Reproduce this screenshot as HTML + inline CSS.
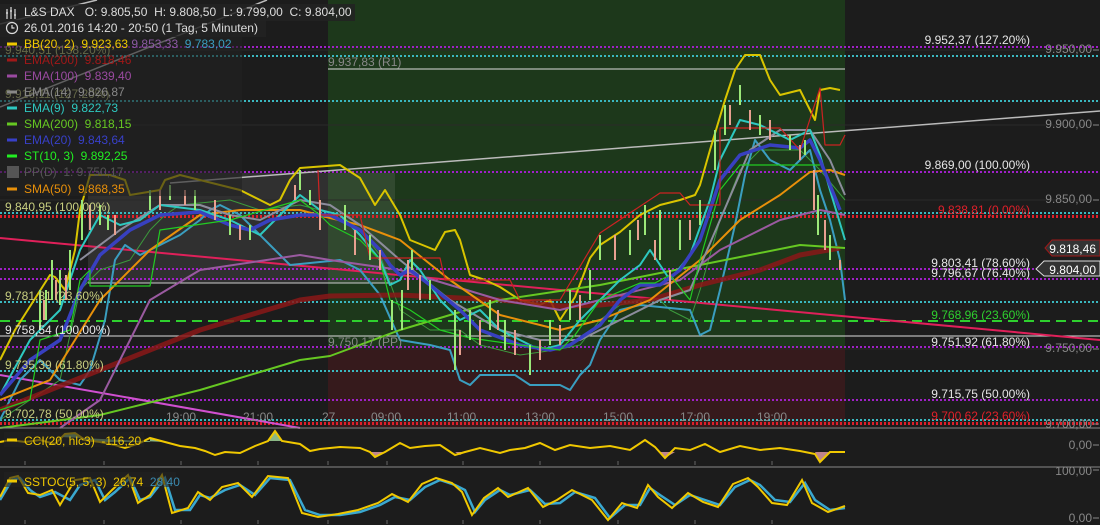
<!DOCTYPE html>
<html><head><meta charset="utf-8"><style>
html,body{margin:0;padding:0;background:#1c1c1c;}
svg{display:block;font-family:"Liberation Sans",sans-serif;}
text{white-space:pre;}
</style></head><body>
<svg width="1100" height="525" viewBox="0 0 1100 525" xmlns="http://www.w3.org/2000/svg" xml:space="preserve">
<rect width="1100" height="525" fill="#1c1c1c"/>
<rect x="328" y="0" width="517" height="348" fill="#1d381b"/>
<rect x="328" y="348" width="517" height="79" fill="#361a1c"/>
<rect x="88" y="173" width="307" height="110" fill="#ffffff" fill-opacity="0.09"/>
<line x1="88" y1="283" x2="395" y2="283" stroke="#ccc" stroke-width="1"/>
<line x1="328" y1="69" x2="845" y2="69" stroke="#ddd" stroke-width="1"/>
<line x1="0" y1="336" x2="1100" y2="336" stroke="#ddd" stroke-width="1"/>
<g stroke="#2a2a2a" stroke-width="1">
<line x1="0" y1="50" x2="1090" y2="50"/><line x1="0" y1="125" x2="1090" y2="125"/><line x1="0" y1="200" x2="1090" y2="200"/><line x1="0" y1="349" x2="1090" y2="349"/>
</g>
<g fill="none" stroke-width="2" stroke-dasharray="2 2">
<line x1="0" y1="47" x2="1100" y2="47" stroke="#a020c8"/>
<line x1="0" y1="56" x2="1100" y2="56" stroke="#3bb8c0"/>
<line x1="0" y1="101" x2="1100" y2="101" stroke="#3bb8c0"/>
<line x1="0" y1="172" x2="1100" y2="172" stroke="#a020c8"/>
<line x1="0" y1="213" x2="1100" y2="213" stroke="#3bb8c0"/>
<line x1="0" y1="216.5" x2="1100" y2="216.5" stroke="#e0202a" stroke-width="3"/>
<line x1="0" y1="269" x2="1100" y2="269" stroke="#a020c8"/>
<line x1="0" y1="279" x2="1100" y2="279" stroke="#a020c8"/>
<line x1="0" y1="302" x2="1100" y2="302" stroke="#3bb8c0"/>
<line x1="0" y1="347" x2="1100" y2="347" stroke="#a020c8"/>
<line x1="0" y1="371" x2="1100" y2="371" stroke="#3bb8c0"/>
<line x1="0" y1="400" x2="1100" y2="400" stroke="#a020c8"/>
<line x1="0" y1="420" x2="1100" y2="420" stroke="#3bb8c0"/>
<line x1="0" y1="423.5" x2="1100" y2="423.5" stroke="#e0202a" stroke-width="3"/>
</g>
<line x1="0" y1="321" x2="1100" y2="321" stroke="#2ed02e" stroke-width="2" stroke-dasharray="10 6"/>
<g fill="none" stroke-width="1.5">
<line x1="0" y1="24" x2="97" y2="0" stroke="#bbb"/>
<line x1="0" y1="107" x2="267" y2="0" stroke="#bbb"/>
<line x1="170" y1="183" x2="1100" y2="111" stroke="#bbb"/>
<line x1="0" y1="238" x2="1100" y2="340" stroke="#e0205a" stroke-width="2"/>
<line x1="0" y1="375" x2="300" y2="428" stroke="#d050d0" stroke-width="2"/>
</g>
<g fill="none" stroke-linejoin="round">
<polyline stroke="#3c9a3c" stroke-width="1" points="0,420 60,380 80,290 100,270 130,260 150,230 165,215 180,205 230,200 260,210 300,205 340,215 360,230 380,255 400,310 430,330 460,330 480,345 520,355 555,350 580,345 600,320 620,305 640,300 660,300 670,310 690,320 700,290 720,220 740,170 760,150 800,150 820,170 845,200"/>
<polyline stroke="#d9c400" stroke-width="2" points="0,360 15,330 50,275 55,277 65,290 75,250 80,210 90,175 110,175 125,180 130,195 160,190 165,180 180,175 200,180 240,190 270,205 280,200 290,180 300,168 340,165 360,178 375,205 385,190 400,215 410,240 435,250 445,232 455,230 460,240 470,275 485,280 500,287 520,300 540,305 550,300 560,320 575,297 590,258 600,245 620,232 640,215 660,205 680,200 695,195 700,185 710,150 725,100 735,70 745,55 760,55 770,80 780,95 800,90 810,110 815,120 820,90 830,88 840,90"/>
<polyline stroke="#3a9ec0" stroke-width="2" points="0,420 20,380 40,360 60,380 80,385 90,370 105,320 115,260 125,245 140,255 150,250 180,235 200,220 210,210 220,205 240,215 270,245 290,265 320,262 340,260 360,270 380,295 400,340 430,345 450,350 460,380 470,385 480,375 515,375 530,385 560,385 570,390 580,375 590,365 600,340 620,310 640,305 690,310 700,335 710,330 720,290 735,225 745,175 755,140 770,160 790,170 810,150 820,190 830,220 840,260 845,300"/>
<polyline stroke="#8a1818" stroke-width="5" stroke-opacity="0.85" points="0,410 100,370 200,330 300,300 330,296 400,295 500,300 560,306 600,305 650,300 700,285 760,270 800,255 840,248"/>
<polyline stroke="#66c822" stroke-width="2" points="0,428 100,415 200,390 300,360 330,356 400,330 500,300 600,285 700,265 800,245 845,248"/>
<polyline stroke="#9a5aa0" stroke-width="2" points="60,428 100,400 150,300 200,270 300,255 330,260 400,270 500,300 560,310 600,300 680,280 720,250 780,220 820,210 845,215"/>
<polyline stroke="#e8900a" stroke-width="2" points="0,400 50,380 100,300 150,250 200,215 240,210 300,210 330,218 360,225 400,240 450,280 500,315 560,330 600,320 650,300 700,260 740,220 780,195 810,172 830,170 845,175"/>
<polyline stroke="#8c8c9c" stroke-width="2" points="80,260 120,230 160,205 200,205 230,215 260,220 300,200 330,205 360,225 400,260 450,300 500,330 540,340 580,340 620,320 660,300 690,290 720,220 750,150 780,130 810,130 830,160 845,195"/>
<polyline stroke="#2ec8c0" stroke-width="2" points="0,395 30,340 60,310 80,250 100,215 120,225 140,220 160,205 200,210 230,220 260,235 280,215 300,195 320,210 340,215 360,235 380,260 390,285 400,280 410,260 420,270 440,300 460,320 480,310 500,330 520,340 540,350 560,345 580,320 600,300 620,280 640,265 650,250 660,265 670,280 690,255 710,200 720,160 740,120 760,125 790,140 810,130 820,155 830,190 845,240"/>
<polyline stroke="#3840c0" stroke-width="3.5" points="0,395 30,360 60,340 80,290 100,255 130,230 160,215 200,212 230,225 250,230 270,220 300,215 330,215 360,230 380,250 390,265 400,275 410,270 430,285 460,310 480,330 520,345 550,350 570,345 600,325 620,300 640,285 660,285 680,270 700,240 720,180 740,155 770,145 800,148 810,140 820,160 840,210"/>
<polyline stroke="#22cc22" stroke-width="1.2" points="0,410 30,400 40,340 70,330 80,280 90,270 90,286 150,286 160,230 230,220 300,200 320,215 330,225 360,240 380,260 390,300 410,310 440,330 470,338 520,345 560,350 575,335 600,300 640,283 655,283 670,275 690,300 700,260 720,190 740,165 820,165"/>
<polyline stroke="#cc2222" stroke-width="1.2" points="318,170 320,215 360,215 370,258 440,258 445,280 510,280 520,300 560,300 600,233 660,193 680,193 690,205 720,205 720,128 780,128 800,150 820,88 825,145 840,145 845,135"/>
</g>
<g stroke-width="2">
<path d="M40 330v-40M46 320v-30M52 300v-40M60 305v-35M70 290v-40M82 240v-40M100 225v-20M108 230v-15M150 210v-20M170 200v-15M195 210v-20M230 235v-20M250 240v-15M300 190v-20M310 205v-15M345 230v-25M370 260v-25M392 330v-30M402 330v-40M412 270v-20M430 300v-20M455 370v-60M470 340v-30M490 330v-30M505 350v-30M530 375v-30M550 345v-25M570 320v-30M590 300v-30M600 260v-25M630 255v-25M645 235v-30M660 260v-50M680 250v-30M700 225v-25M715 170v-40M725 135v-30M740 105v-20M760 135v-20M790 150v-15M805 155v-15M818 235v-40M830 260v-25" stroke="#9be878"/>
<path d="M44 320v-20M56 300v-20M66 300v-25M90 230v-25M115 235v-20M160 210v-20M185 205v-15M215 220v-20M240 240v-15M295 200v-15M320 230v-30M355 255v-25M380 270v-20M408 290v-30M420 300v-25M460 355v-25M480 345v-25M498 330v-20M515 355v-25M540 360v-20M560 345v-20M580 320v-25M615 260v-25M638 240v-20M655 260v-20M670 300v-30M690 240v-20M730 125v-20M750 130v-20M770 140v-20M800 160v-15M814 210v-40M825 250v-30M840 270v-10" stroke="#e8a090"/>
</g>
<g font-size="12" text-anchor="end">
<text x="1030" y="44" fill="#e6e6e6">9.952,37 (127.20%)</text>
<text x="1030" y="169" fill="#e6e6e6">9.869,00 (100.00%)</text>
<text x="1030" y="214" fill="#e0202a">9.838,81 (0,00%)</text>
<text x="1030" y="267" fill="#e6e6e6">9.803,41 (78.60%)</text>
<text x="1030" y="277" fill="#e6e6e6">9.796,67 (76.40%)</text>
<text x="1030" y="319" fill="#2ed02e">9.768,96 (23.60%)</text>
<text x="1030" y="346" fill="#e6e6e6">9.751,92 (61.80%)</text>
<text x="1030" y="398" fill="#e6e6e6">9.715,75 (50.00%)</text>
<text x="1030" y="420" fill="#e0202a">9.700,62 (23.60%)</text>
<g fill="#888">
<text x="1092" y="53">9.950,00</text><text x="1092" y="128">9.900,00</text><text x="1092" y="203">9.850,00</text><text x="1092" y="352">9.750,00</text><text x="1092" y="428">9.700,00</text>
<text x="1092" y="449">0,00</text><text x="1092" y="475">100,00</text><text x="1092" y="522">0,00</text>
</g>
</g>
<g stroke="#888"><path d="M1093 50h6M1093 125h6M1093 200h6M1093 349h6M1093 424h6M1093 445h6M1093 470h6M1093 518h6"/></g>
<path d="M1045 248 L1052 240 H1100 V256 H1052 Z" fill="#333" stroke="#a01818"/>
<text x="1096" y="253" font-size="12" fill="#fff" text-anchor="end">9.818,46</text>
<path d="M1036 269 L1044 261 H1100 V276 H1044 Z" fill="#333" stroke="#ddd"/>
<text x="1096" y="274" font-size="12" fill="#fff" text-anchor="end">9.804,00</text>
<g font-size="12" fill="#888">
<text x="328" y="66">9.937,83 (R1)</text>
<text x="328" y="346">9.750,17 (PP)</text>
<text x="166" y="421">19:00</text><text x="243" y="421">21:00</text><text x="322" y="421">27</text><text x="371" y="421">09:00</text><text x="447" y="421">11:00</text><text x="525" y="421">13:00</text><text x="603" y="421">15:00</text><text x="680" y="421">17:00</text><text x="757" y="421">19:00</text>
</g>
<g font-size="12" fill="#c8cf80">
<text x="5" y="54">9.940,51 (138.20%)</text>
<text x="5" y="98">9.916,11 (127.20%)</text>
<text x="5" y="211">9.840,95 (100.00%)</text>
<text x="5" y="300">9.781,81 (23.60%)</text>
<text x="5" y="369">9.735,39 (61.80%)</text>
<text x="5" y="418">9.702,78 (50.00%)</text>
</g>
<text x="5" y="334" font-size="12" fill="#e6e6e6">9.758,54 (100.00%)</text>
<rect x="0" y="4" width="355" height="17" fill="#222" fill-opacity="0.85"/>
<rect x="0" y="20" width="266" height="17" fill="#222" fill-opacity="0.85"/>
<rect x="0" y="36" width="242" height="160" fill="#222" fill-opacity="0.6"/>
<g font-size="12">
<text x="24" y="16" fill="#ddd">L&amp;S DAX   O: 9.805,50  H: 9.808,50  L: 9.799,00  C: 9.804,00</text>
<text x="24" y="32" fill="#ddd">26.01.2016 14:20 - 20:50 (1 Tag, 5 Minuten)</text>
<text x="24" y="48" fill="#f0c800">BB(20, 2)  9.923,63 <tspan fill="#8a5aa0">9.853,33</tspan>  <tspan fill="#3a9ec0">9.783,02</tspan></text>
<text x="24" y="64" fill="#a01818">EMA(200)  9.818,46</text>
<text x="24" y="80" fill="#9a4aa0">EMA(100)  9.839,40</text>
<text x="24" y="96" fill="#888">EMA(14)  9.826,87</text>
<text x="24" y="112" fill="#2ec8c0">EMA(9)  9.822,73</text>
<text x="24" y="128" fill="#66c822">SMA(200)  9.818,15</text>
<text x="24" y="144" fill="#3840c8">EMA(20)  9.843,64</text>
<text x="24" y="160" fill="#22ee22">ST(10, 3)  9.892,25</text>
<text x="24" y="176" fill="#555">PP(D)  1: 9.750,17</text>
<text x="24" y="193" fill="#e8900a">SMA(50)  9.868,35</text>
</g>
<g stroke-width="3">
<path d="M7 44h10" stroke="#f0c800"/><path d="M7 60h10" stroke="#a01818"/><path d="M7 76h10" stroke="#9a4aa0"/><path d="M7 92h10" stroke="#888"/><path d="M7 108h10" stroke="#2ec8c0"/><path d="M7 124h10" stroke="#66c822"/><path d="M7 140h10" stroke="#3840c8"/><path d="M7 156h10" stroke="#22ee22"/><path d="M7 189h10" stroke="#e8900a"/>
</g>
<rect x="7" y="166" width="12" height="12" fill="#555"/>
<g stroke="#ddd" fill="none" stroke-width="1.2"><path d="M7 9v10M11 7v12M15 9v10M6 13h2M10 11h2M14 15h2"/><circle cx="12" cy="28" r="5.5"/><path d="M12 25v3h2.5"/></g>
<line x1="0" y1="428" x2="1100" y2="428" stroke="#888"/>
<line x1="0" y1="467" x2="1100" y2="467" stroke="#888"/>
<g stroke="#666"><path d="M25 461v4M104 461v4M181 461v4M258 461v4M328 461v4M387 461v4M463 461v4M540 461v4M618 461v4M695 461v4M772 461v4M25 520v4M104 520v4M181 520v4M258 520v4M328 520v4M387 520v4M463 520v4M540 520v4M618 520v4M695 520v4M772 520v4"/></g>
<path d="M60 437 L65 434 L75 433 L85 440 L100 442 L150 442 L150 438 L165 442 Z M268 441 L275 431 L282 441 Z" fill="#a8e0a0" fill-opacity="0.8"/>
<path d="M370 452 L375 457 L385 452 Z M455 452 L460 455 L465 452 Z M660 452 L665 458 L675 452 Z M815 452 L820 462 L830 452 Z" fill="#e8a0a8" fill-opacity="0.8"/>
<polyline fill="none" stroke="#f0c800" stroke-width="2" points="0,442 10,440 25,442 40,440 55,444 65,434 75,433 85,440 100,442 115,445 125,448 140,443 150,438 165,442 180,446 195,448 205,451 215,455 225,452 240,453 255,446 268,441 275,431 282,441 300,444 310,451 320,449 340,447 360,448 370,452 375,457 385,452 400,443 410,448 425,446 440,445 455,455 465,452 480,448 500,453 510,450 525,448 540,443 555,450 570,445 590,448 610,446 630,450 645,440 655,447 665,458 675,448 690,450 705,444 720,452 740,446 760,450 780,448 800,451 815,454 820,462 830,452 845,452"/>
<rect x="4" y="432" width="140" height="15" fill="#222" fill-opacity="0.6"/>
<path d="M7 440h10" stroke="#f0c800" stroke-width="3"/>
<text x="24" y="445" font-size="12" fill="#f0c800">CCI(20, hlc3)  -116,20</text>
<polyline fill="none" stroke="#3aa8d0" stroke-width="2.5" points="0,500 12,480 20,478 30,490 40,497 55,492 70,500 80,485 95,480 105,500 115,492 130,478 140,500 150,497 165,478 175,510 190,510 200,495 210,498 225,490 240,485 255,495 270,478 290,480 305,510 320,515 340,515 360,512 380,505 395,497 410,500 425,487 440,480 455,485 465,490 475,512 485,500 500,490 510,495 530,490 545,504 560,503 575,492 595,498 610,518 625,505 640,505 650,488 660,495 675,505 690,495 705,500 720,505 735,487 750,480 760,485 775,500 790,502 805,483 815,500 830,510 845,508"/>
<polyline fill="none" stroke="#f0c800" stroke-width="2" points="0,497 10,478 18,476 28,493 40,495 52,490 60,505 75,480 90,478 100,502 112,490 128,475 138,503 150,495 162,475 172,513 188,508 198,492 210,500 222,487 238,483 252,497 268,476 288,478 302,513 318,517 338,514 358,510 378,503 392,494 408,502 422,484 436,478 452,483 462,492 472,515 484,498 498,488 508,497 528,488 543,507 557,500 572,490 592,500 608,520 622,503 637,508 648,485 658,497 672,508 688,493 703,502 718,507 733,484 748,478 758,487 772,503 787,505 802,480 812,503 828,512 845,506"/>
<rect x="4" y="472" width="172" height="15" fill="#222" fill-opacity="0.6"/>
<path d="M7 481h10" stroke="#f0c800" stroke-width="3"/>
<text x="24" y="486" font-size="12" fill="#f0c800">SSTOC(5, 5, 3)  26,74  <tspan fill="#3a8ab0">28,40</tspan></text>
</svg>
</body></html>
